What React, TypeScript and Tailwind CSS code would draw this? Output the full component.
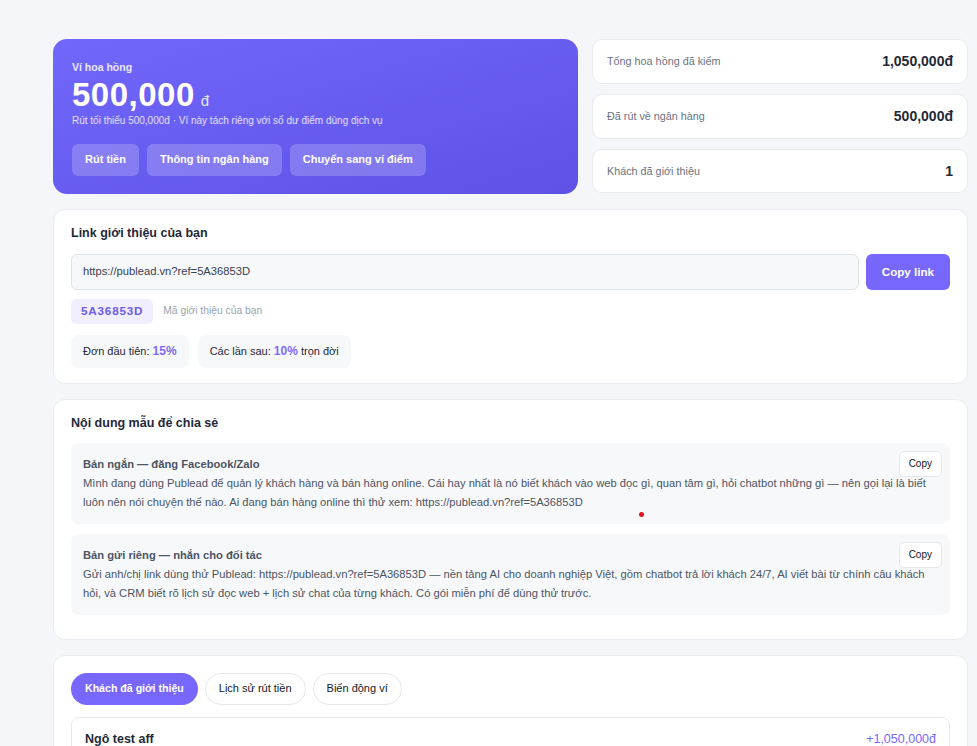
import { useState } from "react";

const stats = [
  { label: "Tổng hoa hồng đã kiếm", value: "1,050,000đ" },
  { label: "Đã rút về ngân hàng", value: "500,000đ" },
  { label: "Khách đã giới thiệu", value: "1" },
];

const templates = [
  {
    title: "Bản ngắn — đăng Facebook/Zalo",
    body: "Mình đang dùng Publead để quản lý khách hàng và bán hàng online. Cái hay nhất là nó biết khách vào web đọc gì, quan tâm gì, hỏi chatbot những gì — nên gọi lại là biết luôn nên nói chuyện thế nào. Ai đang bán hàng online thì thử xem: https://publead.vn?ref=5A36853D",
  },
  {
    title: "Bản gửi riêng — nhắn cho đối tác",
    body: "Gửi anh/chị link dùng thử Publead: https://publead.vn?ref=5A36853D — nền tảng AI cho doanh nghiệp Việt, gồm chatbot trả lời khách 24/7, AI viết bài từ chính câu khách hỏi, và CRM biết rõ lịch sử đọc web + lịch sử chat của từng khách. Có gói miễn phí để dùng thử trước.",
  },
];

const tabs = ["Khách đã giới thiệu", "Lịch sử rút tiền", "Biến động ví"];

export default function App() {
  const [tab, setTab] = useState(0);

  return (
    <div
      className="min-h-screen bg-[#f5f6fa] pl-[53px] pr-[9px] pt-[39px] pb-10 text-[#1f2937] antialiased"
      style={{ fontFamily: '"Liberation Sans", Arial, sans-serif' }}
    >
      <div className="flex flex-col gap-[15px]">
        {/* ── Ví + thống kê ── */}
        <div className="grid grid-cols-[1fr_376px] gap-[14px]">
          <div className="rounded-[14px] bg-gradient-to-br from-[#7267fb] to-[#5e52e6] px-[19px] pt-[21px] pb-[18px] text-white">
            <p className="text-[10.5px] font-bold leading-[14px] text-white/85">Ví hoa hồng</p>
            <div className="mt-[4px] flex items-baseline gap-[6px]">
              <span className="text-[33px] font-extrabold leading-[34px] tracking-[0.5px]">500,000</span>
              <span className="text-[15px] text-white/85">đ</span>
            </div>
            <p className="mt-[1px] text-[10px] leading-[14px] text-white/80">
              Rút tối thiểu 500,000đ · Ví này tách riêng với số dư điểm dùng dịch vụ
            </p>
            <div className="mt-[16px] flex gap-[8px]">
              {["Rút tiền", "Thông tin ngân hàng", "Chuyển sang ví điểm"].map((b) => (
                <button
                  key={b}
                  className="h-[32px] rounded-[6px] bg-white/20 px-[13px] text-[11px] font-bold text-white"
                >
                  {b}
                </button>
              ))}
            </div>
          </div>

          <div className="flex flex-col gap-[10px]">
            {stats.map((s) => (
              <div
                key={s.label}
                className="flex flex-1 items-center justify-between rounded-[10px] border border-[#e8ebf0] bg-white px-[14px]"
              >
                <span className="text-[10.8px] text-[#6b7280]">{s.label}</span>
                <span className="text-[14px] font-bold text-[#1f2937]">{s.value}</span>
              </div>
            ))}
          </div>
        </div>

        {/* ── Link giới thiệu ── */}
        <div className="rounded-[12px] border border-[#e8ebf0] bg-white px-[17px] pt-[15px] pb-[15px]">
          <h2 className="text-[12.5px] font-bold leading-[16px] text-[#1f2937]">Link giới thiệu của bạn</h2>
          <div className="mt-[13px] flex gap-[7px]">
            <div className="flex h-[36px] flex-1 items-center rounded-[6px] border border-[#dfe4ea] bg-[#f7f8fa] px-[11px] text-[11.2px] text-[#374151]">
              https://publead.vn?ref=5A36853D
            </div>
            <button className="h-[36px] rounded-[6px] bg-[#7767fd] px-[16px] text-[11.6px] font-bold text-white">
              Copy link
            </button>
          </div>
          <div className="mt-[9px] flex items-center gap-[10px]">
            <span className="flex h-[25px] items-center rounded-[5px] bg-[#f1efff] px-[10px] text-[11.7px] font-bold tracking-[0.8px] text-[#6c5ce7]">
              5A36853D
            </span>
            <span className="text-[10.3px] text-[#9ca3af]">Mã giới thiệu của bạn</span>
          </div>
          <div className="mt-[11px] flex gap-[9px]">
            <div className="flex h-[33px] items-center rounded-[8px] bg-[#f7f8fa] px-[12px] text-[11px] text-[#1f2937]">
              Đơn đầu tiên:&nbsp;<b className="text-[12px] text-[#7c6cf5]">15%</b>
            </div>
            <div className="flex h-[33px] items-center rounded-[8px] bg-[#f7f8fa] px-[12px] text-[11px] text-[#1f2937]">
              Các lần sau:&nbsp;<b className="text-[12px] text-[#7c6cf5]">10%</b>&nbsp;trọn đời
            </div>
          </div>
        </div>

        {/* ── Nội dung mẫu ── */}
        <div className="relative rounded-[12px] border border-[#e8ebf0] bg-white px-[17px] pt-[15px] pb-[24px]">
          <h2 className="text-[12.5px] font-bold leading-[16px] text-[#1f2937]">Nội dung mẫu để chia sẻ</h2>
          <div className="mt-[12px] flex flex-col gap-[10px]">
            {templates.map((t) => (
              <div key={t.title} className="relative rounded-[8px] bg-[#f7f8fa] pl-[12px] pr-[18px] pt-[14px] pb-[11px]">
                <p className="text-[11.2px] font-bold leading-[14px] text-[#4b5563]">{t.title}</p>
                <p className="mt-[3px] text-[11.2px] leading-[19.5px] text-[#4b5563]">{t.body}</p>
                <button className="absolute right-[8px] top-[8px] h-[26px] rounded-[5px] border border-[#e5e7eb] bg-white px-[9px] text-[10px] text-[#111827]">
                  Copy
                </button>
              </div>
            ))}
          </div>
          <span className="absolute left-[585px] top-[112px] h-[5px] w-[5px] rounded-full bg-[#e8101a]" />
        </div>

        {/* ── Tabs ── */}
        <div className="rounded-[12px] border border-[#e8ebf0] bg-white px-[17px] pt-[17px] pb-[16px]">
          <div className="flex gap-[7px]">
            {tabs.map((t, i) => (
              <button
                key={t}
                onClick={() => setTab(i)}
                className={
                  i === tab
                    ? "h-[32px] rounded-full bg-[#7767fd] px-[14px] text-[10.6px] font-bold text-white"
                    : "h-[32px] rounded-full border border-[#e3e7ec] bg-white px-[13px] text-[11px] text-[#111827]"
                }
              >
                {t}
              </button>
            ))}
          </div>
          <div className="mt-[12px] rounded-[8px] border border-[#e6e9ee] px-[13px] pt-[12px] pb-[30px]">
            <div className="flex items-center justify-between">
              <span className="text-[12.5px] font-bold text-[#1f2937]">Ngô test aff</span>
              <span className="text-[12.5px] text-[#7767fd]">+1,050,000đ</span>
            </div>
          </div>
        </div>
      </div>
    </div>
  );
}
